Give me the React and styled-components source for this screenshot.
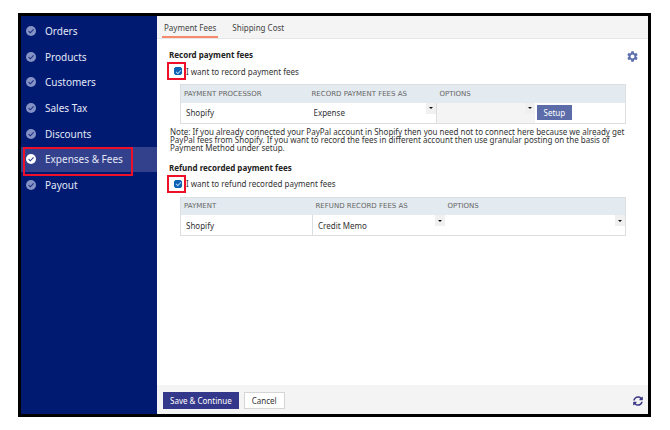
import React from "react";
import styled, { createGlobalStyle, css } from "styled-components";
import { MdSettings } from "react-icons/md";
import { FaSyncAlt } from "react-icons/fa";

const GlobalStyle = createGlobalStyle`
  * {
    box-sizing: border-box;
  }

  body {
    margin: 0;
    background: #fff;
    color: #333;
    font-family: "Noto Sans", Verdana, sans-serif;
    font-size: 8px;
  }

  button, select, input {
    font: inherit;
    color: inherit;
  }
`;

const Page = styled.div`
  display: flex;
  min-height: 100vh;
  padding: 13px 19px 13px 18px;
`;

const Frame = styled.div`
  flex: 1;
  display: flex;
  min-width: 0;
  border: 3px solid #000;
`;

const Sidebar = styled.nav`
  flex: none;
  width: 136px;
  padding-top: 2px;
  background: #001a72;
`;

const NavList = styled.ul`
  display: grid;
  grid-auto-rows: 1fr;
  height: 180px;
  margin: 0;
  padding: 0;
  list-style: none;
`;

const NavItem = styled.li`
  position: relative;
  display: flex;
  background: ${({ $active }) => ($active ? "#33408c" : "transparent")};
`;

const NavLink = styled.a`
  flex: 1;
  display: flex;
  align-items: center;
  gap: 9px;
  padding-left: 5px;
  color: #e4e8f6;
  font-size: 10px;
  text-decoration: none;
`;

const Marker = styled.span`
  position: absolute;
  border: 2px solid #ee1028;
  pointer-events: none;
`;

const NavMarker = styled(Marker)`
  inset: 0 24px -4px 2px;
`;

const CheckMarker = styled(Marker)`
  inset: -5px -4px -5px -7px;
`;

const Main = styled.main`
  flex: 1;
  display: flex;
  flex-direction: column;
  min-width: 0;
`;

const Tabs = styled.div`
  display: flex;
  gap: 12px;
  height: 23px;
  padding-left: 5px;
  background: #f4f4f4;
  border-bottom: 1px solid #e6e6e6;
`;

const Tab = styled.button`
  padding: 3px 2px 0;
  border: 0;
  border-bottom: 2px solid ${({ $active }) => ($active ? "#f58a6c" : "transparent")};
  background: none;
  color: #444;
  cursor: pointer;
`;

const Content = styled.div`
  position: relative;
  flex: 1;
  padding: 10px 22px 0 12px;
`;

const Settings = styled.button`
  position: absolute;
  top: 11px;
  right: 9px;
  display: flex;
  padding: 0;
  border: 0;
  background: none;
  color: #5b6fae;
  cursor: pointer;
`;

const Section = styled.section`
  & + & {
    margin-top: 10px;
  }
`;

const Heading = styled.h2`
  margin: 0;
  color: #222;
  font-size: 8px;
  line-height: 12px;
`;

const CheckLabel = styled.label`
  display: flex;
  align-items: center;
  gap: 4px;
  height: 20px;
  padding-left: 5px;
`;

const CheckHolder = styled.span`
  position: relative;
  display: flex;
`;

const CheckInput = styled.input`
  display: grid;
  place-items: center;
  width: 8px;
  height: 8px;
  margin: 0;
  border: 1px solid #0b62b5;
  border-radius: 2px;
  appearance: none;

  &:checked {
    background: #0b62b5;
  }

  &:checked::before {
    content: "";
    width: 4px;
    height: 2px;
    border: solid #a9cdf0;
    border-width: 0 0 1px 1px;
    transform: rotate(-45deg);
  }
`;

const Table = styled.table`
  width: calc(100% - 11px);
  margin: 3px 0 0 11px;
  border: 1px solid #dcdfe2;
  border-collapse: collapse;
  table-layout: fixed;
`;

const HeadCell = styled.th`
  width: ${({ $width }) => $width || "auto"};
  height: 18px;
  padding: 0 3px;
  background: #e3eaf0;
  color: #666;
  font-family: "DejaVu Sans", Verdana, sans-serif;
  font-size: 7px;
  font-weight: 400;
  text-align: left;
  text-transform: uppercase;
  white-space: nowrap;
`;

const Cell = styled.td`
  height: 20px;
  padding: 0;
  border-right: ${({ $divided }) => ($divided ? "1px solid #dcdfe2" : "0")};
  background: ${({ $muted }) => ($muted ? "#f4f4f4" : "#fff")};
`;

const CellText = styled.span`
  padding-left: 5px;
`;

const SelectHolder = styled.div`
  position: relative;
  display: flex;
  height: 20px;
`;

const Select = styled.select`
  flex: 1;
  min-width: 0;
  padding: 0 12px 0 5px;
  border: 0;
  appearance: none;
  background: none;
`;

const Arrow = styled.span`
  position: absolute;
  top: 0;
  right: 0;
  display: grid;
  place-items: center;
  width: 10px;
  height: 11px;
  background: #f0f0f0;
  pointer-events: none;

  &::before {
    content: "";
    border: 2px solid transparent;
    border-top-color: #111;
    border-bottom: 0;
  }
`;

const Button = styled.button`
  height: 17px;
  padding: 0 7px;
  border: 1px solid #d5d5d5;
  background: #fff;
  color: #333;
  cursor: pointer;

  ${({ $primary }) =>
    $primary &&
    css`
      padding: 0 6px;
      border-color: #34388a;
      background: #34388a;
      color: #fff;
    `}
`;

const SetupButton = styled(Button)`
  display: block;
  height: 15px;
  margin-left: 2px;
  padding: 0 6px;
  border-color: #5c6ca9;
  background: #5c6ca9;
  color: #fff;
`;

const Note = styled.p`
  margin: 4px 0 0 1px;
  line-height: 8px;
`;

const Footer = styled.footer`
  display: flex;
  align-items: center;
  gap: 5px;
  height: 29px;
  padding: 2px 5px 0 6px;
  background: #f4f4f4;
`;

const Refresh = styled.button`
  display: flex;
  margin-left: auto;
  padding: 0;
  border: 0;
  background: none;
  color: #3c3a86;
  cursor: pointer;
`;

const navItems = ["Orders", "Products", "Customers", "Sales Tax", "Discounts", "Expenses & Fees", "Payout"];

const CheckIcon = ({ active }) => (
  <svg width="10" height="10" viewBox="0 0 10 10" aria-hidden="true">
    <circle cx="5" cy="5" r="5" fill={active ? "#fff" : "#8492c5"} />
    <path d="M2.6 5.1 4.3 6.8 7.6 3.4" fill="none" stroke={active ? "#33408c" : "#1c3080"} strokeWidth="1.1" />
  </svg>
);

const CheckRow = ({ children }) => (
  <CheckLabel>
    <CheckHolder>
      <CheckInput type="checkbox" defaultChecked />
      <CheckMarker />
    </CheckHolder>
    {children}
  </CheckLabel>
);

const SelectBox = ({ label, value = "" }) => (
  <SelectHolder>
    <Select aria-label={label} defaultValue={value}>
      <option value={value}>{value}</option>
    </Select>
    <Arrow />
  </SelectHolder>
);

const App = () => {
  return (
    <Page>
      <GlobalStyle />
      <Frame>
        <Sidebar>
          <NavList>
            {navItems.map((item) => {
              const active = item === "Expenses & Fees";
              return (
                <NavItem key={item} $active={active}>
                  <NavLink href="#">
                    <CheckIcon active={active} />
                    {item}
                  </NavLink>
                  {active && <NavMarker />}
                </NavItem>
              );
            })}
          </NavList>
        </Sidebar>
        <Main>
          <Tabs>
            <Tab $active>Payment Fees</Tab>
            <Tab>Shipping Cost</Tab>
          </Tabs>
          <Content>
            <Settings aria-label="Settings">
              <MdSettings size={13} />
            </Settings>
            <Section>
              <Heading>Record payment fees</Heading>
              <CheckRow>I want to record payment fees</CheckRow>
              <Table>
                <thead>
                  <tr>
                    <HeadCell $width="128px">Payment processor</HeadCell>
                    <HeadCell $width="128px">Record payment fees as</HeadCell>
                    <HeadCell $width="98px">Options</HeadCell>
                    <HeadCell />
                  </tr>
                </thead>
                <tbody>
                  <tr>
                    <Cell><CellText>Shopify</CellText></Cell>
                    <Cell $divided><SelectBox label="Record payment fees as" value="Expense" /></Cell>
                    <Cell $muted><SelectBox label="Options" /></Cell>
                    <Cell><SetupButton>Setup</SetupButton></Cell>
                  </tr>
                </tbody>
              </Table>
              <Note>
                Note: If you already connected your PayPal account in Shopify then you need not to connect here because
                we already get PayPal fees from Shopify. If you want to record the fees in different account then use
                granular posting on the basis of Payment Method under setup.
              </Note>
            </Section>
            <Section>
              <Heading>Refund recorded payment fees</Heading>
              <CheckRow>I want to refund recorded payment fees</CheckRow>
              <Table>
                <thead>
                  <tr>
                    <HeadCell $width="132px">Payment</HeadCell>
                    <HeadCell $width="132px">Refund record fees as</HeadCell>
                    <HeadCell>Options</HeadCell>
                  </tr>
                </thead>
                <tbody>
                  <tr>
                    <Cell $divided><CellText>Shopify</CellText></Cell>
                    <Cell><SelectBox label="Refund record fees as" value="Credit Memo" /></Cell>
                    <Cell><SelectBox label="Options" /></Cell>
                  </tr>
                </tbody>
              </Table>
            </Section>
          </Content>
          <Footer>
            <Button $primary>Save &amp; Continue</Button>
            <Button>Cancel</Button>
            <Refresh aria-label="Refresh">
              <FaSyncAlt size={10} />
            </Refresh>
          </Footer>
        </Main>
      </Frame>
    </Page>
  );
};

export default App;
